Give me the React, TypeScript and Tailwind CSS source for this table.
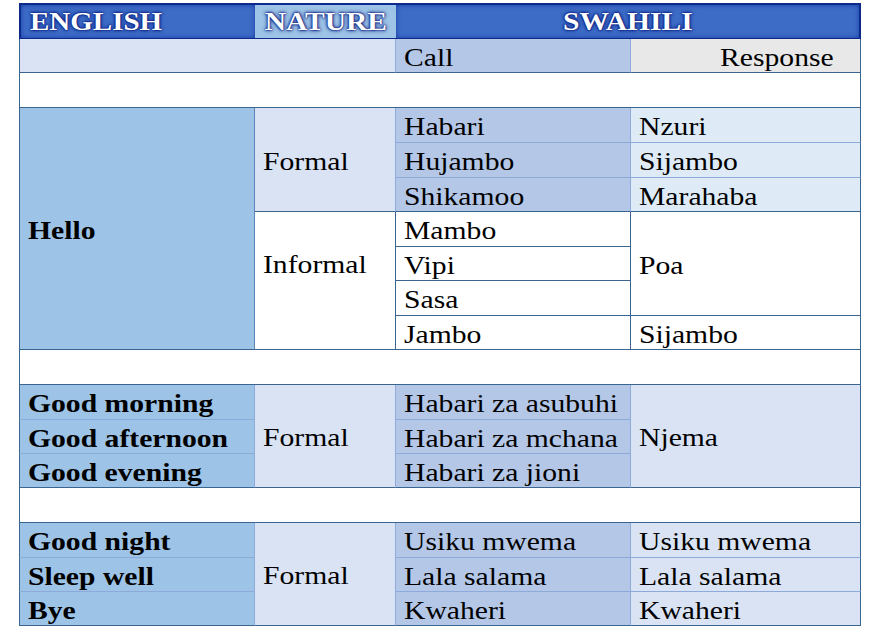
import React from "react";

const txt = "font-['Liberation_Serif',serif] text-[26px] leading-none text-black";
const head =
  "font-['Liberation_Serif',serif] text-[25px] leading-none font-bold text-white [text-shadow:0_0_2px_#06187a,0_0_2px_#06187a,0_0_4px_#0b2690]";

// the reference text is slightly stretched sideways, so each label is widened a little
type TdProps = React.TdHTMLAttributes<HTMLTableCellElement> & { right?: boolean };

const Td: React.FC<TdProps> = ({ className = "", right, children, ...rest }) => (
  <td {...rest} className={`p-0 pl-2 pt-[4px] align-middle whitespace-nowrap ${txt} ${className}`}>
    {children && (
      <span className={`inline-block scale-x-[1.14] ${right ? "origin-right" : "origin-left"}`}>{children}</span>
    )}
  </td>
);

const App: React.FC = () => {
  return (
    <div className="w-[881px] h-[634px] bg-white pt-[3px] pl-[19px]">
      <table className="table-fixed w-[842px] border-separate border-spacing-0">
        <colgroup>
          <col className="w-[236px]" />
          <col className="w-[141px]" />
          <col className="w-[235px]" />
          <col className="w-[230px]" />
        </colgroup>
        <tbody>
          {/* header */}
          <tr className="h-[36px]">
            <td className={`p-0 pl-[9px] align-middle bg-[#3d6cc6] border-t-2 border-l-2 border-b border-[#0c2a8c] shadow-[inset_0_0_5px_#1a3aa6] ${head}`}>
              <span className="inline-block origin-left scale-x-[1.16]">ENGLISH</span>
            </td>
            <td className={`p-0 text-center align-middle bg-[#9dc3e6] border-t-2 border-b border-[#0c2a8c] ${head}`}>
              <span className="inline-block origin-center scale-x-[1.18]">NATURE</span>
            </td>
            <td colSpan={2} className={`p-0 text-center align-middle bg-[#3d6cc6] border-t-2 border-r-2 border-b border-[#0c2a8c] shadow-[inset_0_0_5px_#1a3aa6] ${head}`}>
              <span className="inline-block origin-center scale-x-[1.18]">SWAHILI</span>
            </td>
          </tr>
          <tr className="h-[34px]">
            <Td colSpan={2} className="bg-[#dae3f3] border-l border-l-[#3b6591] border-r border-r-[#8eaadb] border-b border-b-[#3b6591]" />
            <Td className="bg-[#b4c7e7] border-r border-r-[#8eaadb] border-b border-b-[#3b6591]">Call</Td>
            <Td right className="bg-[#e8e8e8] text-right pr-[26px] border-r border-b border-[#3b6591]">Response</Td>
          </tr>
          <tr className="h-[35px]">
            <td colSpan={4} className="bg-white border-l border-r border-b border-[#3b6591]" />
          </tr>

          {/* Hello */}
          <tr className="h-[35px]">
            <Td rowSpan={7} className="font-bold bg-[#9dc3e6] border-l border-l-[#3b6591] border-r border-r-[#5b84b8] border-b border-b-[#3b6591]">
              Hello
            </Td>
            <Td rowSpan={3} className="bg-[#dae3f3] border-r border-r-[#8eaadb] border-b border-b-[#3b6591]">Formal</Td>
            <Td className="bg-[#b4c7e7] border-r border-r-[#8eaadb] border-b border-b-[#8eaadb]">Habari</Td>
            <Td className="bg-[#deebf7] border-r border-r-[#3b6591] border-b border-b-[#8eaadb]">Nzuri</Td>
          </tr>
          <tr className="h-[35px]">
            <Td className="bg-[#b4c7e7] border-r border-r-[#8eaadb] border-b border-b-[#8eaadb]">Hujambo</Td>
            <Td className="bg-[#deebf7] border-r border-r-[#3b6591] border-b border-b-[#8eaadb]">Sijambo</Td>
          </tr>
          <tr className="h-[34px]">
            <Td className="bg-[#b4c7e7] border-r border-r-[#8eaadb] border-b border-b-[#3b6591]">Shikamoo</Td>
            <Td className="bg-[#deebf7] border-r border-b border-[#3b6591]">Marahaba</Td>
          </tr>
          <tr className="h-[35px]">
            <Td rowSpan={4} className="!align-top !pt-[40px] bg-white border-r border-b border-[#3b6591]">Informal</Td>
            <Td className="bg-white border-r border-b border-[#3b6591]">Mambo</Td>
            <Td rowSpan={3} className="bg-white border-r border-b border-[#3b6591]">Poa</Td>
          </tr>
          <tr className="h-[34px]">
            <Td className="bg-white border-r border-b border-[#3b6591]">Vipi</Td>
          </tr>
          <tr className="h-[35px]">
            <Td className="bg-white border-r border-b border-[#3b6591]">Sasa</Td>
          </tr>
          <tr className="h-[34px]">
            <Td className="bg-white border-r border-b border-[#3b6591]">Jambo</Td>
            <Td className="bg-white border-r border-b border-[#3b6591]">Sijambo</Td>
          </tr>
          <tr className="h-[35px]">
            <td colSpan={4} className="bg-white border-l border-r border-b border-[#3b6591]" />
          </tr>

          {/* Good morning / afternoon / evening */}
          <tr className="h-[35px]">
            <Td className="font-bold bg-[#9dc3e6] border-l border-l-[#3b6591] border-r border-r-[#8eaadb] border-b border-b-[#8eaadb]">Good morning</Td>
            <Td rowSpan={3} className="bg-[#dae3f3] border-r border-r-[#8eaadb] border-b border-b-[#3b6591]">Formal</Td>
            <Td className="bg-[#b4c7e7] border-r border-r-[#8eaadb] border-b border-b-[#8eaadb]">Habari za asubuhi</Td>
            <Td rowSpan={3} className="bg-[#dae3f3] border-r border-b border-[#3b6591]">Njema</Td>
          </tr>
          <tr className="h-[34px]">
            <Td className="font-bold bg-[#9dc3e6] border-l border-l-[#3b6591] border-r border-r-[#8eaadb] border-b border-b-[#8eaadb]">Good afternoon</Td>
            <Td className="bg-[#b4c7e7] border-r border-r-[#8eaadb] border-b border-b-[#8eaadb]">Habari za mchana</Td>
          </tr>
          <tr className="h-[34px]">
            <Td className="font-bold bg-[#9dc3e6] border-l border-l-[#3b6591] border-r border-r-[#8eaadb] border-b border-b-[#3b6591]">Good evening</Td>
            <Td className="bg-[#b4c7e7] border-r border-r-[#8eaadb] border-b border-b-[#3b6591]">Habari za jioni</Td>
          </tr>
          <tr className="h-[35px]">
            <td colSpan={4} className="bg-white border-l border-r border-b border-[#3b6591]" />
          </tr>

          {/* Good night / Sleep well / Bye */}
          <tr className="h-[35px]">
            <Td className="font-bold bg-[#9dc3e6] border-l border-l-[#3b6591] border-r border-r-[#8eaadb] border-b border-b-[#8eaadb]">Good night</Td>
            <Td rowSpan={3} className="bg-[#dae3f3] border-r border-r-[#8eaadb] border-b border-b-[#3b6591]">Formal</Td>
            <Td className="bg-[#b4c7e7] border-r border-r-[#8eaadb] border-b border-b-[#8eaadb]">Usiku mwema</Td>
            <Td className="bg-[#dae3f3] border-r border-r-[#3b6591] border-b border-b-[#8eaadb]">Usiku mwema</Td>
          </tr>
          <tr className="h-[34px]">
            <Td className="font-bold bg-[#9dc3e6] border-l border-l-[#3b6591] border-r border-r-[#8eaadb] border-b border-b-[#8eaadb]">Sleep well</Td>
            <Td className="bg-[#b4c7e7] border-r border-r-[#8eaadb] border-b border-b-[#8eaadb]">Lala salama</Td>
            <Td className="bg-[#dae3f3] border-r border-r-[#3b6591] border-b border-b-[#8eaadb]">Lala salama</Td>
          </tr>
          <tr className="h-[34px]">
            <Td className="font-bold bg-[#9dc3e6] border-l border-l-[#3b6591] border-r border-r-[#8eaadb] border-b border-b-[#3b6591]">Bye</Td>
            <Td className="bg-[#b4c7e7] border-r border-r-[#8eaadb] border-b border-b-[#3b6591]">Kwaheri</Td>
            <Td className="bg-[#dae3f3] border-r border-b border-[#3b6591]">Kwaheri</Td>
          </tr>
        </tbody>
      </table>
    </div>
  );
};

export default App;
